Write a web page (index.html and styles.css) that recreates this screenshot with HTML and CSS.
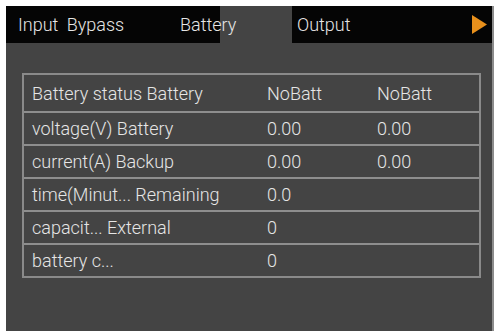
FILE: index.html
```html
<!DOCTYPE html>
<html lang="en">

<head>
  <meta charset="UTF-8">
  <meta name="viewport" content="width=device-width, initial-scale=1.0">
  <title>Battery</title>
  <link rel="stylesheet" href="styles.css">
</head>

<body>
  <div class="screen">
    <div class="tab-bar">
      <div class="tab tab-input">Input Bypass</div>
      <div class="tab tab-battery"><span>Battery</span></div>
      <div class="tab tab-output">
        <span>Output</span>
        <svg class="next-arrow" width="15" height="19" viewBox="0 0 15 19">
          <polygon points="0,0 15,9.5 0,19" fill="#e8901c" />
        </svg>
      </div>
    </div>

    <div class="content">
      <div class="data-table">
        <div class="row row-head">
          <div class="cell">Battery status Battery</div>
          <div class="cell">NoBatt</div>
          <div class="cell">NoBatt</div>
        </div>
        <div class="row">
          <div class="cell">voltage(V) Battery</div>
          <div class="cell">0.00</div>
          <div class="cell">0.00</div>
        </div>
        <div class="row">
          <div class="cell">current(A) Backup</div>
          <div class="cell">0.00</div>
          <div class="cell">0.00</div>
        </div>
        <div class="row">
          <div class="cell">time(Minut... Remaining</div>
          <div class="cell">0.0</div>
          <div class="cell"></div>
        </div>
        <div class="row">
          <div class="cell">capacit... External</div>
          <div class="cell">0</div>
          <div class="cell"></div>
        </div>
        <div class="row">
          <div class="cell">battery c...</div>
          <div class="cell">0</div>
          <div class="cell"></div>
        </div>
      </div>
    </div>
  </div>
</body>

</html>
```

FILE: styles.css
```css
body {
  margin: 0;
  padding: 0;
  background-color: #ffffff;
  font-family: Roboto, 'Noto Sans', sans-serif;
  font-weight: 300;
  color: #e6e6e6;
}

.screen {
  margin: 6px 0 0 6px;
  width: 486px;
  height: 325px;
  background-color: #444444;
  border-right: 2px solid #8c8c8c;
}

/* top tab bar */
.tab-bar {
  display: flex;
  height: 37px;
}

.tab {
  display: flex;
  align-items: center;
  font-size: 18px;
}

.tab-input {
  width: 202px;
  padding-left: 12px;
  background-color: #050505;
  word-spacing: 4px;
}

.tab-battery {
  width: 72px;
  background-color: #444444;
}

.tab-battery span {
  margin-left: -40px;
}

.tab-output {
  flex: 1;
  justify-content: space-between;
  padding-left: 5px;
  padding-right: 5px;
  background-color: #050505;
}

/* battery table */
.content {
  padding: 30px 0 0 16px;
}

.data-table {
  width: 455px;
  border: 2px solid #8a8a8a;
}

.row {
  display: grid;
  grid-template-columns: 235px 110px 1fr;
  height: 31px;
  align-items: center;
  border-top: 2px solid #8e8e8e;
}

.row-head {
  height: 36px;
  border-top: none;
}

.cell {
  padding-left: 8px;
  font-size: 18px;
  white-space: nowrap;
}
```
